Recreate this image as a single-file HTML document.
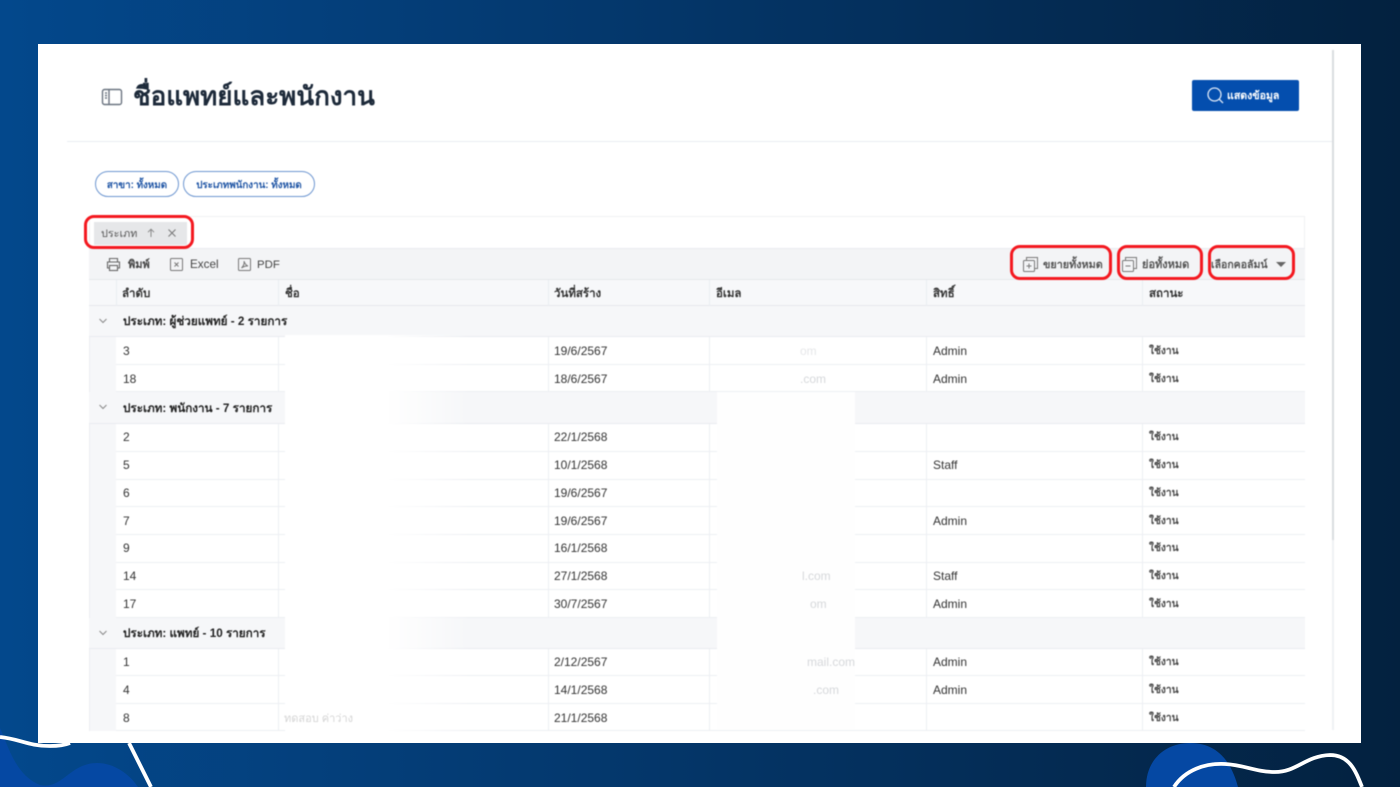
<!DOCTYPE html>
<html lang="th">
<head>
<meta charset="utf-8">
<title>ชื่อแพทย์และพนักงาน</title>
<style>
*{box-sizing:border-box}
html,body{margin:0;padding:0;width:1400px;height:787px;overflow:hidden}
body{position:relative;background:linear-gradient(90deg,#03488c 0%,#043b73 35%,#042d57 70%,#03213f 100%);font-family:"Liberation Sans","Noto Sans CJK SC",sans-serif;color:#333}
#bg{position:absolute;left:0;top:0}
#panel{position:absolute;left:38px;top:44px;width:1323px;height:699px;background:#fff}
#page{position:absolute;left:0;top:0;width:1400px;height:787px;filter:blur(.45px)}
.a{position:absolute;white-space:nowrap}
.line{position:absolute;background:#e9edf2}
.row{position:absolute;left:116px;width:1189px;background:#fff;border-bottom:1px solid #edeff3}
.row span{position:absolute;top:0;font-size:12px;line-height:var(--l,29px);color:#333;white-space:nowrap}
.row span.t{font-size:10.2px;font-weight:700;color:#4a4a4a}
.row i{position:absolute;top:0;bottom:0;width:1px;background:#edeff3}
.grp{position:absolute;left:89px;width:1216px;background:#f6f7f9;border-bottom:1px solid #e9ebf0}
.grp b{position:absolute;left:34px;top:0;font-size:11.7px;line-height:31px;color:#222}
.grp svg{position:absolute;left:9px;top:11px}
.hd{position:absolute;top:281px;height:27px;font-size:11.5px;font-weight:700;line-height:27px;color:#333}
.pill{position:absolute;top:171px;height:26px;border:1.3px solid #6d96d0;border-radius:13px;background:#fff;color:#1f55a5;font-size:9.8px;font-weight:700;line-height:27px;text-align:center}
.red{position:absolute;border:3px solid #f4181f;border-radius:10px}
.tb{position:absolute;top:250px;font-size:12px;line-height:30px;color:#444}
.wh{position:absolute;background:#fff}
.f{position:absolute;font-size:12px;line-height:28px;color:#d6d8db;white-space:nowrap}
</style>
</head>
<body>
<svg id="bg" width="1400" height="787" viewBox="0 0 1400 787">
<path d="M0 728C8 745 15 775 40 785C62 790 70 763 97 763C115 763 130 775 138 787H0Z" fill="#0548a3"/>
<path d="M1146 787C1146 760 1165 743 1190 743C1220 743 1232 765 1238 787Z" fill="#0548a3"/>
<path d="M0 737C20 739 28 746 50 746C60 746 65 745 70 743" fill="none" stroke="#fff" stroke-width="3.8"/>
<path d="M129 743L151 787" fill="none" stroke="#fff" stroke-width="3.8"/>
<path d="M1174 787C1185 770 1205 763 1225 764C1245 765 1255 772 1275 772C1297 772 1305 756 1330 755C1350 755 1356 772 1362 787" fill="none" stroke="#fff" stroke-width="3.8"/>
</svg>
<div id="panel"></div>
<div id="page">
<div class="line" style="left:1332px;top:50px;width:2px;height:490px;background:#d9dcdf"></div>
<div class="line" style="left:1332px;top:540px;width:2px;height:190px;background:#eff1f3"></div>
<div class="line" style="left:67px;top:141px;width:1265px;height:1px"></div>

<svg class="a" style="left:101px;top:88px" width="22" height="18" viewBox="0 0 22 18" fill="none" stroke="#6b7480" stroke-width="1.4"><rect x="1.5" y="1.5" width="19" height="15" rx="2"/><path d="M8 1.5V16.5M4 5H6M4 7.5H6M4 10H6" /></svg>
<div class="a" style="left:133px;top:78px;font-size:26px;font-weight:700;line-height:36px;color:#1d2a3a">ชื่อแพทย์และพนักงาน</div>

<div class="a" style="left:1192px;top:80px;width:107px;height:31px;background:#044eae;border-radius:2px"></div>
<svg class="a" style="left:1206px;top:86px" width="19" height="19" viewBox="0 0 19 19" fill="none" stroke="#dfe9f7" stroke-width="1.3"><circle cx="8.5" cy="8.5" r="6.5"/><path d="M13.2 13.2L17 17"/></svg>
<div class="a" style="left:1227px;top:81px;font-size:10.6px;font-weight:700;line-height:31px;color:#fff">แสดงข้อมูล</div>

<div class="pill" style="left:95px;width:84px">สาขา: ทั้งหมด</div>
<div class="pill" style="left:183px;width:132px">ประเภทพนักงาน: ทั้งหมด</div>

<!-- table frame -->
<div class="a" style="left:89px;top:216px;width:1216px;height:33px;background:#fff;border:1px solid #f0f1f3;border-bottom:0"></div>
<div class="a" style="left:94px;top:222px;width:93px;height:23px;background:#e6e7e9"></div>
<div class="a" style="left:101px;top:223px;font-size:10.8px;line-height:23px;color:#555">ประเภท</div>
<svg class="a" style="left:146px;top:228px" width="10" height="10" viewBox="0 0 10 10" fill="none" stroke="#888" stroke-width="1"><path d="M5 9V1.5M2 4.2L5 1.2L8 4.2"/></svg>
<svg class="a" style="left:167px;top:228px" width="10" height="10" viewBox="0 0 10 10" fill="none" stroke="#777" stroke-width="1"><path d="M1.5 1.5L8.5 8.5M8.5 1.5L1.5 8.5"/></svg>

<!-- toolbar -->
<div class="a" style="left:89px;top:248px;width:1216px;height:32px;background:#f3f4f6;border-top:1px solid #e9ebef;border-bottom:1px solid #e6e8ec"></div>
<svg class="a" style="left:106px;top:257px" width="15" height="15" viewBox="0 0 15 15" fill="none" stroke="#666" stroke-width="1.1"><path d="M3.5 5V1.5H11.5V5M3.5 11H1.5V5H13.5V11H11.5"/><rect x="3.5" y="8.5" width="8" height="5"/></svg>
<div class="tb" style="left:128px;font-weight:700;font-size:11px">พิมพ์</div>
<svg class="a" style="left:170px;top:258px" width="13" height="13" viewBox="0 0 13 13" fill="none" stroke="#777" stroke-width="1"><rect x=".5" y=".5" width="12" height="12" rx="1"/><path d="M4.5 4.5L8.5 8.5M8.5 4.5L4.5 8.5"/></svg>
<div class="tb" style="left:190px;font-size:11.7px">Excel</div>
<svg class="a" style="left:238px;top:258px" width="13" height="13" viewBox="0 0 13 13" fill="none" stroke="#777" stroke-width="1"><rect x=".5" y=".5" width="12" height="12" rx="1"/><path d="M3.5 10C5.5 8 6.5 5.5 6 3.2C7 6 8 7.5 10 8C8 7.8 5.5 8.5 3.5 10Z"/></svg>
<div class="tb" style="left:257px;font-size:11.4px">PDF</div>

<svg class="a" style="left:1023px;top:257px" width="15" height="15" viewBox="0 0 15 15" fill="none" stroke="#777" stroke-width="1"><rect x=".5" y="3.5" width="11" height="11" rx="1"/><path d="M3.5 3V.5H14.5V11.5H12M3.5 9H8.5M6 6.5V11.5"/></svg>
<div class="tb" style="left:1043px;font-size:10.8px;font-weight:700;color:#555">ขยายทั้งหมด</div>
<svg class="a" style="left:1122px;top:257px" width="15" height="15" viewBox="0 0 15 15" fill="none" stroke="#777" stroke-width="1"><rect x=".5" y="3.5" width="11" height="11" rx="1"/><path d="M3.5 3V.5H14.5V11.5H12M3.5 9H8.5"/></svg>
<div class="tb" style="left:1142px;font-size:11px;font-weight:700;color:#555">ย่อทั้งหมด</div>
<div class="tb" style="left:1211px;font-size:10.5px;font-weight:700;color:#555">เลือกคอลัมน์</div>
<svg class="a" style="left:1275px;top:262px" width="12" height="6" viewBox="0 0 12 6"><path d="M1 0H11L6 5Z" fill="#666"/></svg>

<!-- header -->
<div class="a" style="left:89px;top:280px;width:1216px;height:26px;background:#f7f8fa;border-bottom:1px solid #e6e8ec"></div>
<div class="hd" style="left:122px">ลำดับ</div>
<div class="hd" style="left:285px">ชื่อ</div>
<div class="hd" style="left:554px">วันที่สร้าง</div>
<div class="hd" style="left:716px">อีเมล</div>
<div class="hd" style="left:933px">สิทธิ์</div>
<div class="hd" style="left:1149px">สถานะ</div>
<div class="line" style="left:116px;top:280px;width:1px;height:26px"></div>
<div class="line" style="left:278px;top:280px;width:1px;height:26px"></div>
<div class="line" style="left:548px;top:280px;width:1px;height:26px"></div>
<div class="line" style="left:709px;top:280px;width:1px;height:26px"></div>
<div class="line" style="left:926px;top:280px;width:1px;height:26px"></div>
<div class="line" style="left:1142px;top:280px;width:1px;height:26px"></div>

<!-- left gutter -->
<div class="a" style="left:89px;top:306px;width:27px;height:425px;background:#f6f7f9"></div>
<div class="line" style="left:89px;top:306px;width:1px;height:425px;background:#eceef2"></div>

<!-- groups -->
<div class="grp" style="top:306px;height:31px"><svg width="10" height="8" viewBox="0 0 10 8" fill="none" stroke="#888" stroke-width="1"><path d="M1.5 2L5 5.5L8.5 2"/></svg><b style="line-height:32px">ประเภท: ผู้ช่วยแพทย์ - 2 รายการ</b></div>
<div class="grp" style="top:392px;height:32px"><svg width="10" height="8" viewBox="0 0 10 8" fill="none" stroke="#888" stroke-width="1"><path d="M1.5 2L5 5.5L8.5 2"/></svg><b style="line-height:34px">ประเภท: พนักงาน - 7 รายการ</b></div>
<div class="grp" style="top:618px;height:31px"><svg width="10" height="8" viewBox="0 0 10 8" fill="none" stroke="#888" stroke-width="1"><path d="M1.5 2L5 5.5L8.5 2"/></svg><b style="line-height:32px">ประเภท: แพทย์ - 10 รายการ</b></div>

<!-- rows -->
<div class="row" style="top:337px;height:28px"><i style="left:162px"></i><i style="left:432px"></i><i style="left:593px"></i><i style="left:810px"></i><i style="left:1026px"></i><span style="left:7px">3</span><span style="left:438px">19/6/2567</span><span style="left:817px">Admin</span><span class="t" style="left:1033px">ใช้งาน</span></div>
<div class="row" style="top:365px;height:27px"><i style="left:162px"></i><i style="left:432px"></i><i style="left:593px"></i><i style="left:810px"></i><i style="left:1026px"></i><span style="left:7px">18</span><span style="left:438px">18/6/2567</span><span style="left:817px">Admin</span><span class="t" style="left:1033px">ใช้งาน</span></div>

<div class="row" style="top:424px;height:28px;--l:27px"><i style="left:162px"></i><i style="left:432px"></i><i style="left:593px"></i><i style="left:810px"></i><i style="left:1026px"></i><span style="left:7px">2</span><span style="left:438px">22/1/2568</span><span class="t" style="left:1033px">ใช้งาน</span></div>
<div class="row" style="top:452px;height:28px;--l:27px"><i style="left:162px"></i><i style="left:432px"></i><i style="left:593px"></i><i style="left:810px"></i><i style="left:1026px"></i><span style="left:7px">5</span><span style="left:438px">10/1/2568</span><span style="left:817px">Staff</span><span class="t" style="left:1033px">ใช้งาน</span></div>
<div class="row" style="top:480px;height:27px;--l:27px"><i style="left:162px"></i><i style="left:432px"></i><i style="left:593px"></i><i style="left:810px"></i><i style="left:1026px"></i><span style="left:7px">6</span><span style="left:438px">19/6/2567</span><span class="t" style="left:1033px">ใช้งาน</span></div>
<div class="row" style="top:507px;height:28px"><i style="left:162px"></i><i style="left:432px"></i><i style="left:593px"></i><i style="left:810px"></i><i style="left:1026px"></i><span style="left:7px">7</span><span style="left:438px">19/6/2567</span><span style="left:817px">Admin</span><span class="t" style="left:1033px">ใช้งาน</span></div>
<div class="row" style="top:535px;height:28px;--l:27px"><i style="left:162px"></i><i style="left:432px"></i><i style="left:593px"></i><i style="left:810px"></i><i style="left:1026px"></i><span style="left:7px">9</span><span style="left:438px">16/1/2568</span><span class="t" style="left:1033px">ใช้งาน</span></div>
<div class="row" style="top:563px;height:27px;--l:27px"><i style="left:162px"></i><i style="left:432px"></i><i style="left:593px"></i><i style="left:810px"></i><i style="left:1026px"></i><span style="left:7px">14</span><span style="left:438px">27/1/2568</span><span style="left:817px">Staff</span><span class="t" style="left:1033px">ใช้งาน</span></div>
<div class="row" style="top:590px;height:28px"><i style="left:162px"></i><i style="left:432px"></i><i style="left:593px"></i><i style="left:810px"></i><i style="left:1026px"></i><span style="left:7px">17</span><span style="left:438px">30/7/2567</span><span style="left:817px">Admin</span><span class="t" style="left:1033px">ใช้งาน</span></div>

<div class="row" style="top:649px;height:27px;--l:27px"><i style="left:162px"></i><i style="left:432px"></i><i style="left:593px"></i><i style="left:810px"></i><i style="left:1026px"></i><span style="left:7px">1</span><span style="left:438px">2/12/2567</span><span style="left:817px">Admin</span><span class="t" style="left:1033px">ใช้งาน</span></div>
<div class="row" style="top:676px;height:28px"><i style="left:162px"></i><i style="left:432px"></i><i style="left:593px"></i><i style="left:810px"></i><i style="left:1026px"></i><span style="left:7px">4</span><span style="left:438px">14/1/2568</span><span style="left:817px">Admin</span><span class="t" style="left:1033px">ใช้งาน</span></div>
<div class="row" style="top:704px;height:27px"><i style="left:162px"></i><i style="left:432px"></i><i style="left:593px"></i><i style="left:810px"></i><i style="left:1026px"></i><span style="left:7px">8</span><span style="left:438px">21/1/2568</span><span class="t" style="left:1033px">ใช้งาน</span></div>

<!-- redaction patches -->
<div class="wh" style="left:285px;top:335px;width:185px;height:396px;background:linear-gradient(90deg,#fff 0%,#fff 55%,rgba(255,255,255,0) 100%)"></div>
<div class="wh" style="left:717px;top:392px;width:138px;height:337px;background:#fefefe"></div>
<div class="f" style="left:807px;top:648px">mail.com</div>
<div class="f" style="left:813px;top:676px">.com</div>
<div class="f" style="left:802px;top:562px">l.com</div>
<div class="f" style="left:810px;top:590px">om</div>
<div class="f" style="left:800px;top:365px">.com</div>
<div class="f" style="left:800px;top:337px;color:#e6e7e9">om</div>
<div class="a" style="left:284px;top:705px;font-size:11px;line-height:28px;color:#d4d4d4">ทดสอบ ค่าว่าง</div>

<!-- red highlights -->
<div class="red" style="left:84px;top:215px;width:110px;height:34px"></div>
<div class="red" style="left:1010px;top:245px;width:102px;height:35px"></div>
<div class="red" style="left:1117px;top:245px;width:86px;height:35px"></div>
<div class="red" style="left:1208px;top:245px;width:87px;height:35px"></div>
</div>
</body>
</html>
